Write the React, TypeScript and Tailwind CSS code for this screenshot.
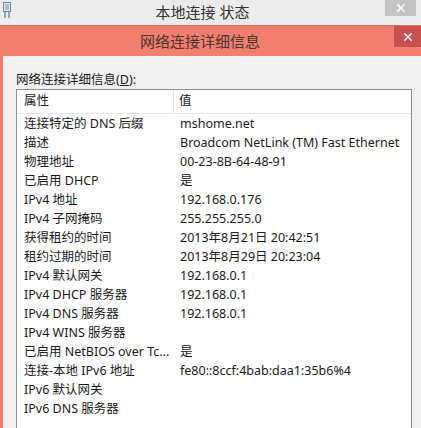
import React from "react";

const rows: [string, string][] = [
  ["连接特定的 DNS 后缀", "mshome.net"],
  ["描述", "Broadcom NetLink (TM) Fast Ethernet"],
  ["物理地址", "00-23-8B-64-48-91"],
  ["已启用 DHCP", "是"],
  ["IPv4 地址", "192.168.0.176"],
  ["IPv4 子网掩码", "255.255.255.0"],
  ["获得租约的时间", "2013年8月21日 20:42:51"],
  ["租约过期的时间", "2013年8月29日 20:23:04"],
  ["IPv4 默认网关", "192.168.0.1"],
  ["IPv4 DHCP 服务器", "192.168.0.1"],
  ["IPv4 DNS 服务器", "192.168.0.1"],
  ["IPv4 WINS 服务器", ""],
  ["已启用 NetBIOS over Tc...", "是"],
  ["连接-本地 IPv6 地址", "fe80::8ccf:4bab:daa1:35b6%4"],
  ["IPv6 默认网关", ""],
  ["IPv6 DNS 服务器", ""],
];

function CloseX({ size = 9 }: { size?: number }) {
  return (
    <svg width={size} height={size} viewBox="0 0 10 10">
      <path d="M1 1 L9 9 M9 1 L1 9" stroke="white" strokeWidth="1.8" strokeLinecap="square" />
    </svg>
  );
}

export default function App() {
  return (
    <div
      className="w-[421px] h-[428px] overflow-hidden bg-[#f0f0f0] flex flex-col text-[#1a1a1a]"
      style={{ fontFamily: '"Noto Sans", "Noto Sans CJK SC", sans-serif' }}
    >
      {/* outer window title bar */}
      <div className="h-[25px] bg-[#ebebeb] flex items-start shrink-0">
        <div className="w-[20px] h-[20px] flex items-start pl-[3px] pt-[2px]">
          <svg width="8" height="17" viewBox="0 0 8 17">
            <rect x="0.5" y="0.5" width="7" height="9" fill="#dfe8ef" stroke="#6d8aa3" />
            <rect x="2" y="2" width="4" height="6" fill="#9fc0da" />
            <path d="M2 10 V16 M6 10 V16" stroke="#5a7a94" strokeWidth="1.2" />
          </svg>
        </div>
        <div className="flex-1 h-[25px] flex items-center justify-center text-[15px] text-[#333] leading-none pb-[1px]">
          本地连接 状态
        </div>
        <div className="w-[31px] h-[16px] bg-[#c4c4c4] flex items-center justify-center mr-[5px]">
          <CloseX size={8} />
        </div>
      </div>

      {/* dialog title bar */}
      <div className="h-[31px] bg-[#f37f6f] border-t border-[#e0705f] flex items-start shrink-0">
        <div className="flex-1 h-[30px] flex items-center justify-center text-[15px] text-[#4b3431] leading-none pl-[6px]">
          网络连接详细信息
        </div>
        <div className="w-[27px] h-[21px] bg-[#c8504f] flex items-center justify-center">
          <CloseX size={8} />
        </div>
      </div>

      {/* dialog body */}
      <div className="flex-1 flex min-h-0">
        <div className="w-[3px] bg-[#f37f6f]" />
        <div className="w-[1px] bg-[#f7f7f7]" />
        <div className="flex-1 flex flex-col pl-[12px] pr-[9px] pt-[14px] min-h-0">
          <div className="text-[12.5px] leading-[19px] text-[#1a1a1a]">
            网络连接详细信息(<span className="underline">D</span>):
          </div>
          <div className="flex-1 bg-white border border-[#8f9295] border-b-0 w-[396px]">
            <div className="grid grid-cols-[157px_1fr] h-[24px] border-b border-[#e6e6e6] text-[12.5px]">
              <div className="pl-[7px] flex items-center border-r border-[#e6e6e6]">属性</div>
              <div className="pl-[5px] flex items-center">值</div>
            </div>
            {rows.map(([k, v], i) => (
              <div key={i} className="grid grid-cols-[158px_1fr] h-[19px] text-[12.5px] leading-[19px]">
                <div className="pl-[7px] whitespace-nowrap overflow-hidden">{k}</div>
                <div className="pl-[5px] whitespace-nowrap">{v}</div>
              </div>
            ))}
          </div>
        </div>
      </div>
    </div>
  );
}
